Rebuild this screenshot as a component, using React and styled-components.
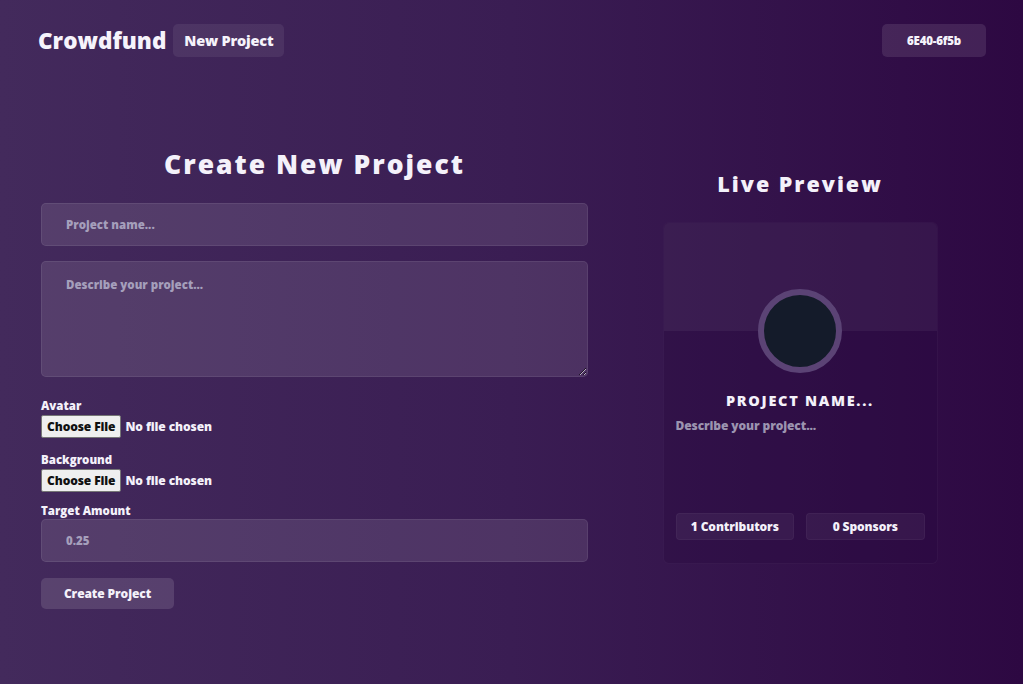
import styled, { createGlobalStyle } from "styled-components";

const GlobalStyle = createGlobalStyle`
  html, body {
    margin: 0;
    padding: 0;
  }
  body {
    min-height: 100vh;
    background: linear-gradient(90deg, #432a5c 0%, #3a1d53 50%, #2d0842 100%);
    font-family: "Open Sans", "Lato", sans-serif;
    color: #f3f0f8;
  }
`;

const Page = styled.div`
  min-height: 684px;
  box-sizing: border-box;
`;

const Header = styled.header`
  display: flex;
  align-items: center;
  justify-content: space-between;
  padding: 24px 37px 0 38px;
  height: 57px;
  box-sizing: border-box;
`;

const Brand = styled.div`
  display: flex;
  align-items: center;
  gap: 7px;
`;

const Logo = styled.h1`
  margin: 0;
  font-size: 22.5px;
  font-weight: 800;
  color: #f6f3fb;
  letter-spacing: 0;
`;

const NavButton = styled.button`
  border: none;
  background: ${(p) => (p.$dark ? "rgba(255,255,255,0.1)" : "rgba(255,255,255,0.07)")};
  color: #f6f3fb;
  font-family: inherit;
  font-weight: 800;
  font-size: ${(p) => (p.$small ? "11.5px" : "14.5px")};
  height: 33px;
  width: ${(p) => p.$w};
  border-radius: 5px;
  padding: 0;
  letter-spacing: -0.2px;
`;

const Main = styled.main`
  display: grid;
  grid-template-columns: 547px 1fr;
  column-gap: 24px;
  padding: 90px 35px 0 41px;
`;

const FormColumn = styled.section`
  display: flex;
  flex-direction: column;
`;

const Title = styled.h2`
  margin: 0 0 ${(p) => p.$mb};
  text-align: center;
  font-weight: 800;
  font-size: ${(p) => p.$size};
  letter-spacing: ${(p) => p.$ls};
  line-height: 1.3;
  color: #f4f1fa;
`;

const TextInput = styled.input`
  box-sizing: border-box;
  height: 43px;
  width: 100%;
  border: 1px solid rgba(255, 255, 255, 0.08);
  background: rgba(255, 255, 255, 0.1);
  border-radius: 5px;
  padding: 0 24px;
  font-family: inherit;
  font-weight: 800;
  font-size: 11.5px;
  color: #a59fbb;
  outline: none;
  &::placeholder {
    color: #a59fbb;
  }
`;

const TextArea = styled.textarea`
  box-sizing: border-box;
  height: 116px;
  width: 100%;
  margin-top: 15px;
  border: 1px solid rgba(255, 255, 255, 0.08);
  background: rgba(255, 255, 255, 0.1);
  border-radius: 5px;
  padding: 15px 24px;
  font-family: inherit;
  font-weight: 800;
  font-size: 11.5px;
  color: #a59fbb;
  outline: none;
  resize: vertical;
  &::placeholder {
    color: #a59fbb;
  }
`;

const Field = styled.div`
  display: flex;
  flex-direction: column;
  align-items: flex-start;
  margin-top: ${(p) => p.$mt};
`;

const Label = styled.label`
  font-size: 11.5px;
  font-weight: 800;
  color: #f4f1fa;
  line-height: 14px;
  margin-bottom: ${(p) => p.$mb || "2px"};
`;

const FileInput = styled.input`
  font-family: inherit;
  font-weight: 800;
  font-size: 12px;
  color: #f4f1fa;
  letter-spacing: -0.1px;
  &::file-selector-button {
    font-family: inherit;
    font-weight: 800;
    font-size: 12px;
    color: #111;
    background: #efefef;
    border: 1px solid #767676;
    border-radius: 2px;
    padding: 2px 5px;
    margin-right: 4px;
    letter-spacing: -0.1px;
  }
`;

const SubmitButton = styled.button`
  margin-top: 16px;
  align-self: flex-start;
  width: 133px;
  height: 31px;
  border: none;
  border-radius: 5px;
  background: rgba(255, 255, 255, 0.12);
  color: #f4f1fa;
  font-family: inherit;
  font-weight: 800;
  font-size: 12px;
  letter-spacing: -0.1px;
`;

const PreviewColumn = styled.section`
  display: flex;
  flex-direction: column;
  align-items: center;
  padding-top: 23px;
`;

const Card = styled.div`
  width: 275px;
  height: 342px;
  box-sizing: border-box;
  border: 1px solid rgba(255, 255, 255, 0.04);
  border-radius: 6px;
  background: rgba(40, 8, 64, 0.35);
  display: flex;
  flex-direction: column;
  overflow: hidden;
`;

const Banner = styled.div`
  height: 108px;
  flex-shrink: 0;
  background: rgba(255, 255, 255, 0.05);
  position: relative;
`;

const Avatar = styled.div`
  position: absolute;
  left: 50%;
  top: 66px;
  width: 72px;
  height: 72px;
  margin-left: -42px;
  border-radius: 50%;
  border: 6px solid #5b4375;
  background: #141b2a;
`;

const CardBody = styled.div`
  flex: 1;
  display: flex;
  flex-direction: column;
  padding: 60px 12px 23px;
`;

const ProjectName = styled.h3`
  margin: 0;
  text-align: center;
  font-size: 14.5px;
  font-weight: 800;
  letter-spacing: 1.7px;
  color: #f4f1fa;
`;

const Description = styled.p`
  margin: 7px 0 0;
  font-size: 12px;
  font-weight: 800;
  color: #9c94b0;
  flex: 1;
  letter-spacing: -0.1px;
`;

const Stats = styled.div`
  display: grid;
  grid-template-columns: 1fr 1fr;
  gap: 12px;
`;

const Stat = styled.div`
  height: 25px;
  display: flex;
  align-items: center;
  justify-content: center;
  border-radius: 4px;
  background: rgba(255, 255, 255, 0.05);
  border: 1px solid rgba(255, 255, 255, 0.04);
  font-size: 12px;
  font-weight: 800;
  color: #f4f1fa;
  letter-spacing: -0.1px;
`;

export default function App() {
  return (
    <Page>
      <GlobalStyle />
      <Header>
        <Brand>
          <Logo>Crowdfund</Logo>
          <NavButton $w="111px">New Project</NavButton>
        </Brand>
        <NavButton $w="104px" $small $dark>
          6E40-6f5b
        </NavButton>
      </Header>
      <Main>
        <FormColumn>
          <Title $size="26.5px" $ls="2px" $mb="22px">Create New Project</Title>
          <TextInput placeholder="Project name..." />
          <TextArea placeholder="Describe your project..." />
          <Field $mt="22px">
            <Label>Avatar</Label>
            <FileInput type="file" />
          </Field>
          <Field $mt="15px">
            <Label>Background</Label>
            <FileInput type="file" />
          </Field>
          <Field $mt="12px">
            <Label $mb="1px">Target Amount</Label>
            <TextInput defaultValue="0.25" />
          </Field>
          <SubmitButton>Create Project</SubmitButton>
        </FormColumn>
        <PreviewColumn>
          <Title $size="21.5px" $ls="2px" $mb="24px">Live Preview</Title>
          <Card>
            <Banner>
              <Avatar />
            </Banner>
            <CardBody>
              <ProjectName>PROJECT NAME...</ProjectName>
              <Description>Describe your project...</Description>
              <Stats>
                <Stat>1 Contributors</Stat>
                <Stat>0 Sponsors</Stat>
              </Stats>
            </CardBody>
          </Card>
        </PreviewColumn>
      </Main>
    </Page>
  );
}
